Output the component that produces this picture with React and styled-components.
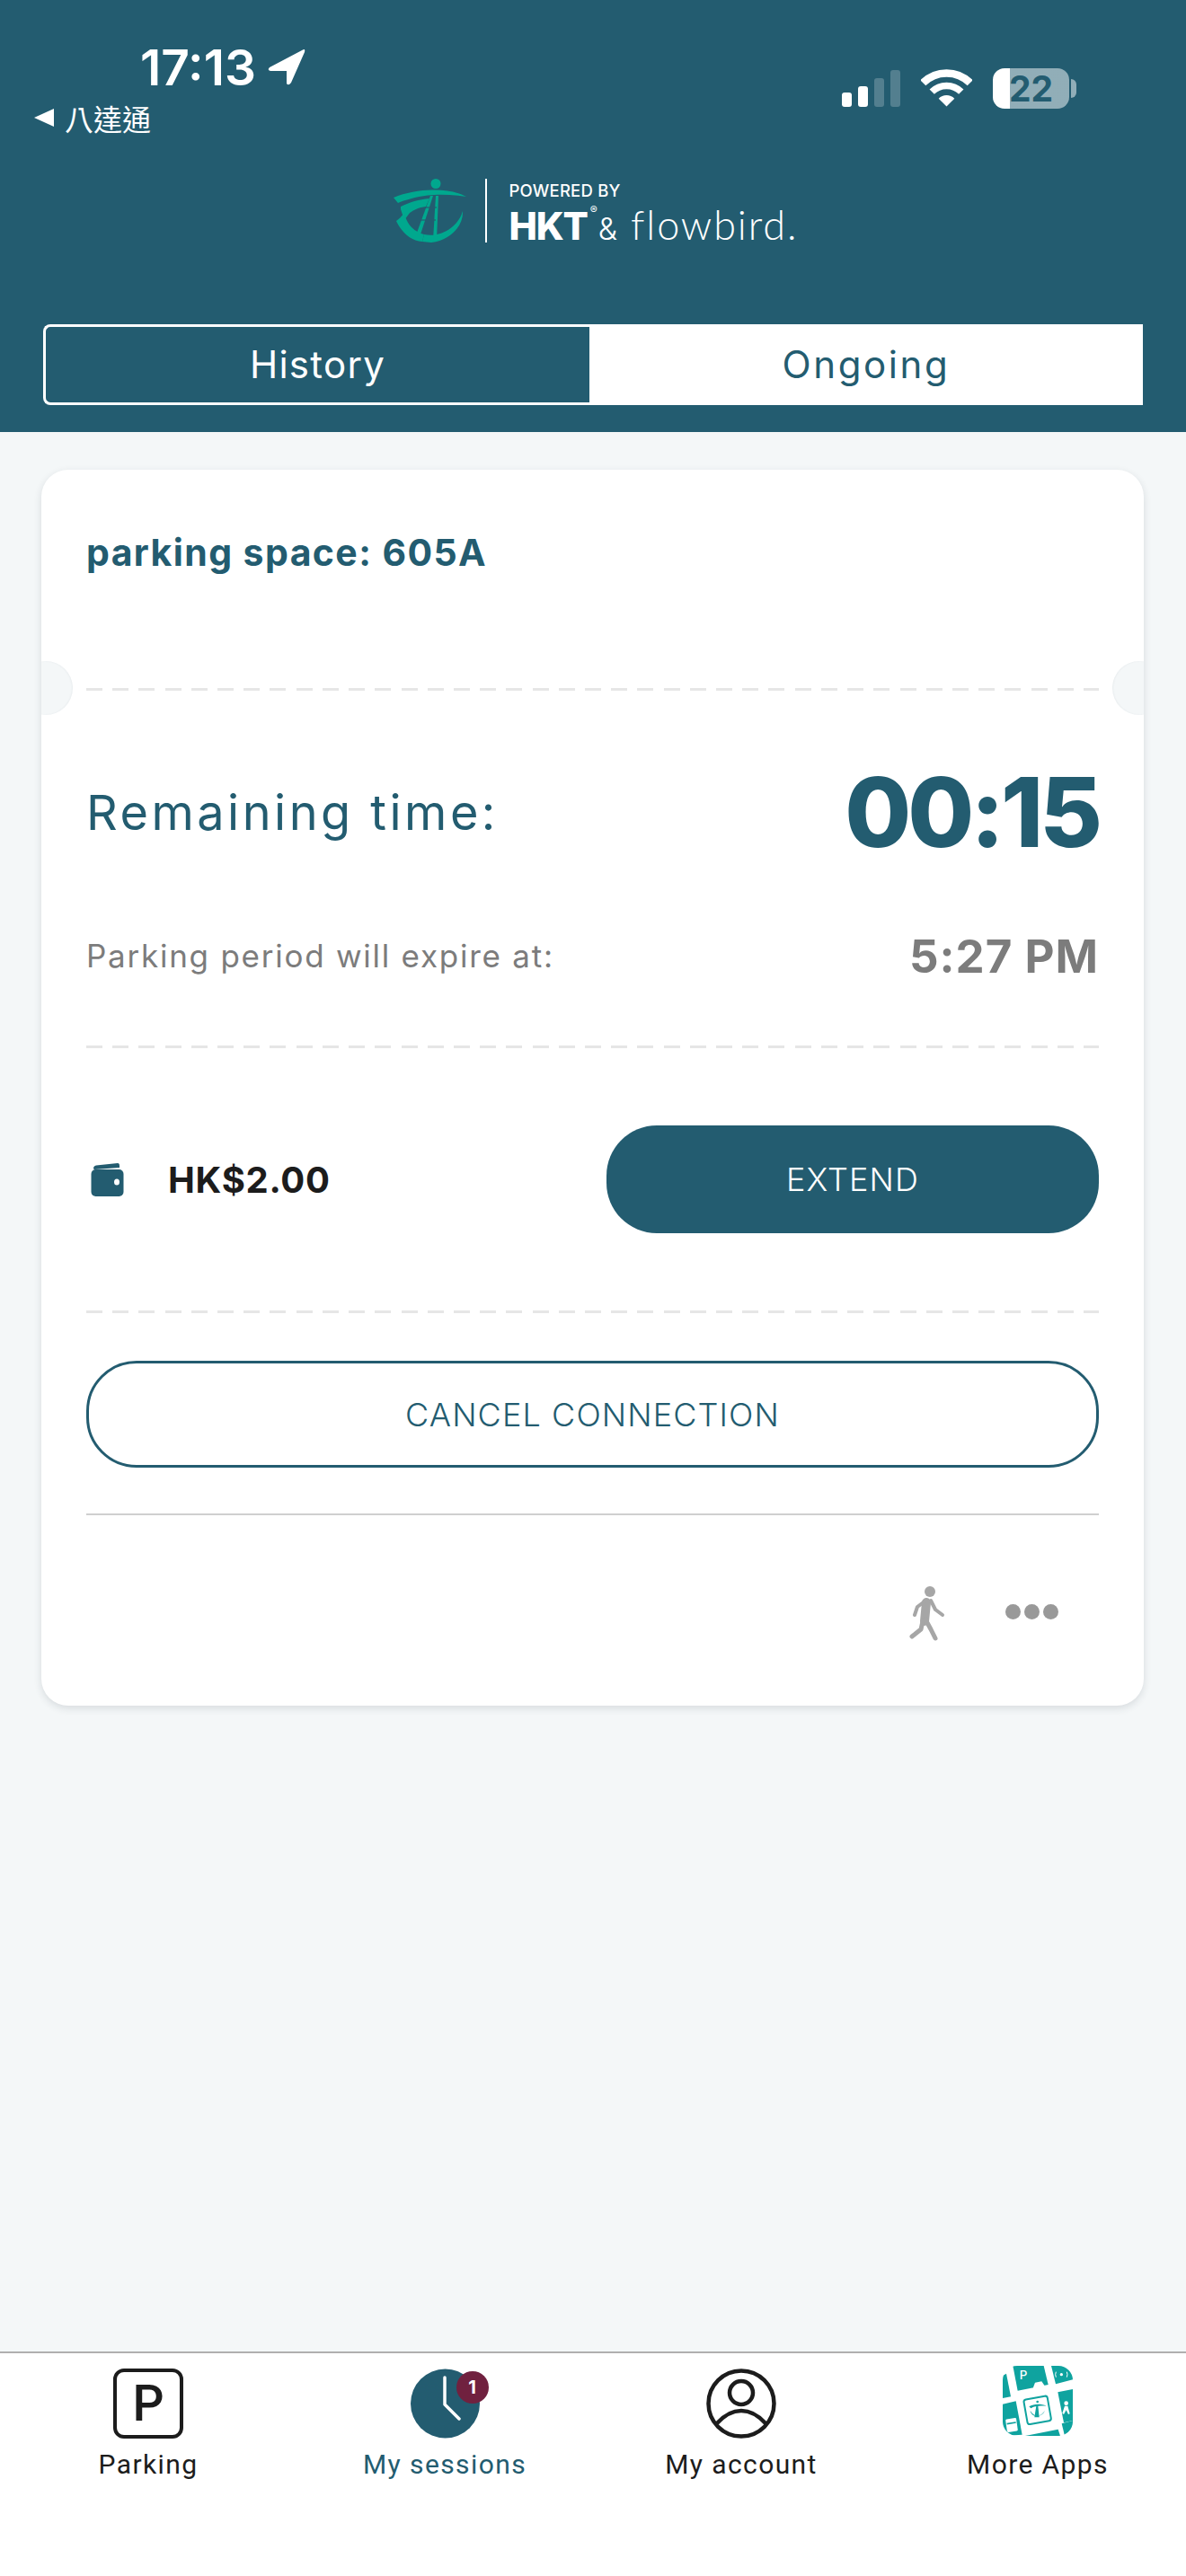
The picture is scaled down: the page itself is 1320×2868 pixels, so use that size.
import styled, { createGlobalStyle } from "styled-components";

const BRAND = "#235c70";
const APP_TEAL = "#0fa39f";

const GlobalStyle = createGlobalStyle`
  html, body {
    margin: 0;
    padding: 0;
    background: #f4f7f8;
  }
  * { box-sizing: border-box; }
`;

const Page = styled.div`
  width: 1320px;
  height: 2868px;
  display: flex;
  flex-direction: column;
  background: #f4f7f8;
  font-family: Inter, "Noto Sans", sans-serif;
`;

const Header = styled.header`
  height: 481px;
  flex: none;
  display: flex;
  flex-direction: column;
  background: ${BRAND};
`;

const StatusBar = styled.div`
  height: 150px;
  padding: 50px 122px 0 38px;
  display: flex;
  justify-content: space-between;
  color: #fff;
`;

const StatusLeft = styled.div`
  display: flex;
  flex-direction: column;
`;

const TimeRow = styled.div`
  height: 50px;
  padding-left: 118px;
  display: flex;
  align-items: center;
  gap: 13px;
  font-size: 55px;
  font-weight: 600;
  letter-spacing: 0;
  line-height: 50px;
`;

const BackRow = styled.div`
  margin-top: 12px;
  display: flex;
  align-items: center;
  gap: 12px;
  font-family: "Noto Sans CJK TC", sans-serif;
  font-size: 32px;
  line-height: 38px;
`;

const BackArrow = styled.span`
  width: 0;
  height: 0;
  border-style: solid;
  border-width: 10px 22px 10px 0;
  border-color: transparent #fff transparent transparent;
`;

const StatusRight = styled.div`
  padding-top: 24px;
  height: 69px;
  display: flex;
  align-items: flex-end;
`;

const SignalBars = styled.div`
  display: flex;
  align-items: flex-end;
  gap: 7px;
  margin-right: 23px;
`;

const SignalBar = styled.span`
  width: 11px;
  height: ${(p) => p.$h}px;
  border-radius: 3px;
  background: ${(p) => (p.$on ? "#fff" : "rgba(255,255,255,.22)")};
`;

const Battery = styled.div`
  width: 85px;
  height: 45px;
  margin-left: 23px;
  margin-bottom: -2px;
  border-radius: 13px;
  overflow: hidden;
  display: flex;
  align-items: center;
  justify-content: center;
  background: linear-gradient(90deg, #fff 0 19px, rgba(255,255,255,.5) 19px);
  color: ${BRAND};
  font-size: 39px;
  font-weight: 700;
  line-height: 1;
`;

const BatteryTip = styled.span`
  width: 6px;
  height: 21px;
  margin-left: 2px;
  margin-bottom: 10px;
  border-radius: 0 6px 6px 0;
  background: rgba(255,255,255,.5);
`;

const LogoRow = styled.div`
  margin-top: 49px;
  padding-left: 438px;
  display: flex;
  align-items: stretch;
  height: 71px;
  color: #fff;
`;

const LogoDivider = styled.span`
  width: 1.5px;
  margin: 0 25px 0 20px;
  background: #fff;
`;

const LogoText = styled.div`
  display: flex;
  flex-direction: column;
`;

const PoweredBy = styled.div`
  margin-top: 4px;
  font-size: 18.5px;
  font-weight: 500;
  line-height: 18px;
  letter-spacing: 0.2px;
`;

const BrandLine = styled.div`
  margin-top: 8px;
  line-height: 42px;
  white-space: nowrap;
`;

const Hkt = styled.span`
  font-size: 42px;
  font-weight: 800;
  letter-spacing: -1.2px;
`;

const Registered = styled.span`
  font-size: 12px;
  line-height: 0;
  vertical-align: 29px;
  margin-left: 3px;
`;

const Amp = styled.span`
  font-size: 34px;
  font-weight: 300;
  margin-left: 1px;
`;

const Flowbird = styled.span`
  margin-left: 15px;
  font-family: Lato, sans-serif;
  font-size: 45px;
  font-weight: 300;
  letter-spacing: 1.9px;
`;

const Tabs = styled.div`
  margin: auto 48px 30px;
  height: 90px;
  display: grid;
  grid-template-columns: 608px 1fr;
`;

const Tab = styled.div`
  display: flex;
  align-items: center;
  justify-content: center;
  font-size: 42px;
  font-weight: 400;
  letter-spacing: ${(p) => (p.$filled ? "2.6px" : "1.3px")};
  padding-bottom: 2px;
  color: ${(p) => (p.$filled ? BRAND : "#fff")};
  background: ${(p) => (p.$filled ? "#fff" : "transparent")};
  border: ${(p) => (p.$filled ? "none" : "3px solid #fff")};
  border-right: none;
  border-radius: ${(p) => (p.$filled ? "0" : "8px 0 0 8px")};
`;

const Card = styled.section`
  position: relative;
  margin: 42px 47px 0 46px;
  padding: 0 50px;
  height: 1376px;
  flex: none;
  background: #fff;
  border-radius: 30px;
  box-shadow: 0 3px 8px rgba(40, 60, 70, 0.14);
`;

const Notch = styled.span`
  position: absolute;
  top: 213px;
  ${(p) => (p.$right ? "right: -25px;" : "left: -25px;")}
  width: 60px;
  height: 60px;
  border-radius: 50%;
  background: #f4f7f8;
  box-shadow: inset ${(p) => (p.$right ? "1px" : "-1px")} 0 2px rgba(40, 60, 70, 0.05);
  clip-path: inset(-2px ${(p) => (p.$right ? "25px" : "-2px")} -2px ${(p) => (p.$right ? "-2px" : "25px")});
`;

const SpaceTitle = styled.div`
  height: 243px;
  padding-top: 71px;
  color: ${BRAND};
  font-size: 41px;
  font-weight: 700;
  line-height: 42px;
  letter-spacing: 1.4px;
`;

const DashLine = styled.div`
  height: 3px;
  margin-top: ${(p) => p.$top || 0}px;
  background: repeating-linear-gradient(90deg, #e6e6e6 0 18px, transparent 18px 29.21px);
`;

const Row = styled.div`
  display: flex;
  align-items: center;
  justify-content: space-between;
  height: ${(p) => p.$h}px;
  margin-top: ${(p) => p.$top}px;
`;

const RemainingLabel = styled.span`
  color: ${BRAND};
  font-size: 54px;
  font-weight: 400;
  letter-spacing: 3.5px;
`;

const Countdown = styled.span`
  color: ${BRAND};
  font-size: 107px;
  font-weight: 800;
  letter-spacing: -4px;
`;

const ExpireLabel = styled.span`
  color: #7c7c7c;
  font-size: 35px;
  letter-spacing: 1.75px;
`;

const ExpireTime = styled.span`
  color: #7c7c7c;
  font-size: 51px;
  font-weight: 700;
  letter-spacing: 1px;
`;

const Price = styled.div`
  display: flex;
  align-items: center;
  gap: 49px;
  padding-left: 5px;
  color: #1c1c1c;
  font-size: 40px;
  font-weight: 700;
  letter-spacing: 0.7px;
`;

const PillButton = styled.button`
  display: block;
  height: ${(p) => p.$h}px;
  width: ${(p) => p.$w};
  margin-top: ${(p) => p.$top || 0}px;
  padding: 0;
  border-radius: 56px;
  border: ${(p) => (p.$solid ? "none" : `3px solid ${BRAND}`)};
  background: ${(p) => (p.$solid ? BRAND : "#fff")};
  color: ${(p) => (p.$solid ? "#fff" : BRAND)};
  font-family: inherit;
  font-size: 36px;
  font-weight: 300;
  letter-spacing: 1.1px;
`;

const Rule = styled.div`
  height: 2px;
  margin-top: 51px;
  background: #cfcfcf;
`;

const CardFooter = styled.div`
  padding: 77px 45px 0 0;
  display: flex;
  justify-content: flex-end;
  align-items: flex-start;
  gap: 71px;
`;

const MoreDots = styled.div`
  display: flex;
  gap: 4px;
  margin-top: 22px;
`;

const Dot = styled.span`
  width: 17px;
  height: 17px;
  border-radius: 50%;
  background: #999;
`;

const BottomNav = styled.nav`
  margin-top: auto;
  height: 250px;
  flex: none;
  display: grid;
  grid-template-columns: repeat(4, 1fr);
  background: #fff;
  border-top: 2px solid #b0b0b0;
  font-family: Roboto, sans-serif;
`;

const NavItem = styled.div`
  display: flex;
  flex-direction: column;
  align-items: center;
  color: ${(p) => (p.$active ? BRAND : "#1c1c1c")};
`;

const NavIcon = styled.div`
  position: relative;
  height: 78px;
  margin-top: 17px;
  margin-bottom: 11px;
  display: flex;
`;

const NavLabel = styled.span`
  font-size: 30px;
  line-height: 36px;
  letter-spacing: 1.4px;
`;

const ParkingBox = styled.div`
  width: 78px;
  height: 78px;
  border: 4px solid #1c1c1c;
  border-radius: 12px;
  display: flex;
  align-items: center;
  justify-content: center;
  color: #1c1c1c;
  font-size: 55px;
  font-weight: 500;
`;

const Badge = styled.span`
  position: absolute;
  top: 3px;
  right: -10px;
  width: 36px;
  height: 36px;
  border-radius: 50%;
  display: flex;
  align-items: center;
  justify-content: center;
  background: #70213f;
  color: #fff;
  font-family: Inter, sans-serif;
  font-size: 20px;
  font-weight: 700;
`;

function LocationArrow() {
  return (
    <svg width="42" height="40" viewBox="0 0 42 40">
      <path d="M39 0.500 L2 20 Q-1 23 3 24 L21 24 L21 38 Q23 41 26 37 L41 3 Q42 -1 39 0.500Z" fill="#fff" />
    </svg>
  );
}

function WifiIcon() {
  return (
    <svg width="57" height="42" viewBox="0 0 57 42" fill="none" stroke="#fff">
      <path d="M2.3 15.3 A37 37 0 0 1 54.7 15.3" strokeWidth="8.5" />
      <path d="M12.2 25.2 A23 23 0 0 1 44.8 25.2" strokeWidth="7.5" />
      <path d="M19.7 32.7 A12.5 12.5 0 0 1 37.3 32.7 L28.5 41.5Z" fill="#fff" stroke="none" />
    </svg>
  );
}

function HktMark() {
  return (
    <svg width="82" height="71" viewBox="0 0 82 71">
      <g fill="#00a88e">
        <circle cx="47" cy="5.5" r="5.5" />
        <path d="M0 21 C14 15 32 12 46 12.5 C60 12.5 72 15 81 20 C66 17.5 50 17 38 18.5 C25 20 12 24 5 27Z" />
        <path d="M8 31 C18 26 28 23 40 22 L36 31 C28 32 22 35 18 38 L12 46 L8 34Z" />
        <path d="M3 47 C6 45 9 42 12 38 C14 48 20 58 34 62 L32 70 C18 69 8 58 3 47Z" />
        <path d="M77 36 C78 50 66 68 42 71 L32 70 L34 62 C52 66 72 54 77 36Z" />
        <path d="M41 19 L44 19 L30 62 L26 60Z" />
        <path d="M47 19 L50 19 L48 68 L44 68Z" />
      </g>
      <g stroke="#235c70" strokeWidth="1.2">
        <path d="M35 32 L48 32" />
        <path d="M31 46 L47 46" />
      </g>
    </svg>
  );
}

function WalkIcon() {
  return (
    <svg width="45" height="70" viewBox="1005 1760 45 70" style={{ margin: "-5px -5px 0" }} fill="none" stroke="#a6a6a6" strokeLinecap="round" strokeLinejoin="round">
      <circle cx="1032" cy="1773" r="6" fill="#a6a6a6" stroke="none" />
      <path d="M1028 1785 L1026 1806" strokeWidth="10" />
      <path d="M1026 1784 L1018 1790 L1015 1799" strokeWidth="4" />
      <path d="M1033 1783 L1038 1793 L1046 1799" strokeWidth="4" />
      <path d="M1024 1806 L1022 1815 L1012 1823" strokeWidth="5" />
      <path d="M1027 1804 L1033 1815 L1038 1825" strokeWidth="5" />
    </svg>
  );
}

function WalletIcon() {
  return (
    <svg width="37" height="37" viewBox="0 0 37 37">
      <path d="M3 6 Q3 3 6 2.500 L30 0 Q32 0 32 3 L32 5 L4 7Z" fill={BRAND} />
      <rect x="0.500" y="7" width="36" height="30" rx="5" fill={BRAND} />
      <ellipse cx="29" cy="21" rx="3" ry="3.500" fill="#fff" />
    </svg>
  );
}

function ClockIcon() {
  return (
    <svg width="77" height="78" viewBox="0 0 77 78" fill="none">
      <circle cx="38.500" cy="39" r="38.500" fill={BRAND} />
      <path d="M38 10 L38 40 L54 56" stroke="#fff" strokeWidth="3.500" strokeLinecap="round" strokeLinejoin="round" />
    </svg>
  );
}

function AccountIcon() {
  return (
    <svg width="78" height="78" viewBox="0 0 78 78" fill="none" stroke="#1c1c1c" strokeWidth="4.500">
      <circle cx="39" cy="39" r="36.500" />
      <circle cx="39" cy="27" r="13" />
      <path d="M12 61 C22 50 30 47 39 47 C48 47 56 50 66 61" />
    </svg>
  );
}

function AppsIcon() {
  return (
    <svg width="78" height="78" viewBox="0 0 234 234" style={{ marginTop: -3 }}>
      <defs>
        <clipPath id="appsClip">
          <rect width="234" height="234" rx="48" />
        </clipPath>
      </defs>
      <g clipPath="url(#appsClip)">
        <rect width="234" height="234" fill="#fff" />
        <g fill={APP_TEAL}>
          <polygon points="34,0 137,0 152,63 50,83" />
          <polygon points="162,0 234,0 234,46 177,61" />
          <polygon points="0,33 12,26 27,103 0,108" />
          <polygon points="184,88 234,78 234,183 204,190" />
          <polygon points="0,128 44,118 65,230 0,234" />
          <polygon points="75,234 185,212 192,234" />
          <polygon points="197,193 234,183 234,234 207,234" />
        </g>
        <rect x="76" y="106" width="80" height="84" rx="8" fill="none" stroke={APP_TEAL} strokeWidth="6" transform="rotate(-10 116 148)" />
        <g fill={APP_TEAL}>
          <circle cx="116" cy="120" r="4" />
          <path d="M88 136 C104 126 128 126 146 134 C128 132 104 134 94 142Z" />
          <path d="M92 150 C94 168 122 180 142 148 C134 168 110 178 92 150Z" />
          <path d="M112 134 L118 134 L122 172 L106 172Z" />
        </g>
        <text x="56" y="46" fill="#fff" fontFamily="Inter, sans-serif" fontSize="40" fontWeight="500">P</text>
        <g fill="#fff">
          <path d="M102 72 L108 56 L130 52 L138 64 L138 76 L102 82Z" />
          <circle cx="196" cy="29" r="5" />
          <circle cx="212" cy="125" r="7" />
          <path d="M207 134 L217 134 L224 160 L219 162 L212 148 L204 162 L199 158Z" />
          <rect x="12" y="176" width="36" height="44" rx="4" transform="rotate(-8 30 198)" />
        </g>
        <g fill="none" stroke="#fff" strokeWidth="3">
          <path d="M178 20 Q174 29 178 38" />
          <path d="M214 20 Q218 29 214 38" />
        </g>
        <path d="M14 194 L44 189" stroke={APP_TEAL} strokeWidth="5" />
      </g>
    </svg>
  );
}

export default function App() {
  return (
    <>
      <GlobalStyle />
      <Page>
        <Header>
          <StatusBar>
            <StatusLeft>
              <TimeRow>
                17:13
                <LocationArrow />
              </TimeRow>
              <BackRow>
                <BackArrow />
                八達通
              </BackRow>
            </StatusLeft>
            <StatusRight>
              <SignalBars>
                <SignalBar $on $h={16} />
                <SignalBar $on $h={23} />
                <SignalBar $h={32} />
                <SignalBar $h={41} />
              </SignalBars>
              <WifiIcon />
              <Battery>22</Battery>
              <BatteryTip />
            </StatusRight>
          </StatusBar>
          <LogoRow>
            <HktMark />
            <LogoDivider />
            <LogoText>
              <PoweredBy>POWERED BY</PoweredBy>
              <BrandLine>
                <Hkt>HKT</Hkt>
                <Registered>®</Registered>
                <Amp>&amp;</Amp>
                <Flowbird>flowbird.</Flowbird>
              </BrandLine>
            </LogoText>
          </LogoRow>
          <Tabs>
            <Tab>History</Tab>
            <Tab $filled>Ongoing</Tab>
          </Tabs>
        </Header>

        <Card>
          <Notch />
          <Notch $right />
          <SpaceTitle>parking space: 605A</SpaceTitle>
          <DashLine />
          <Row $h={120} $top={75}>
            <RemainingLabel>Remaining time:</RemainingLabel>
            <Countdown>00:15</Countdown>
          </Row>
          <Row $h={60} $top={70}>
            <ExpireLabel>Parking period will expire at:</ExpireLabel>
            <ExpireTime>5:27 PM</ExpireTime>
          </Row>
          <DashLine $top={70} />
          <Row $h={120} $top={86}>
            <Price>
              <WalletIcon />
              HK$2.00
            </Price>
            <PillButton $solid $h={120} $w="548px">EXTEND</PillButton>
          </Row>
          <DashLine $top={86} />
          <PillButton $h={119} $w="100%" $top={53}>CANCEL CONNECTION</PillButton>
          <Rule />
          <CardFooter>
            <WalkIcon />
            <MoreDots>
              <Dot />
              <Dot />
              <Dot />
            </MoreDots>
          </CardFooter>
        </Card>

        <BottomNav>
          <NavItem>
            <NavIcon>
              <ParkingBox>P</ParkingBox>
            </NavIcon>
            <NavLabel>Parking</NavLabel>
          </NavItem>
          <NavItem $active>
            <NavIcon>
              <ClockIcon />
              <Badge>1</Badge>
            </NavIcon>
            <NavLabel>My sessions</NavLabel>
          </NavItem>
          <NavItem>
            <NavIcon>
              <AccountIcon />
            </NavIcon>
            <NavLabel>My account</NavLabel>
          </NavItem>
          <NavItem>
            <NavIcon>
              <AppsIcon />
            </NavIcon>
            <NavLabel>More Apps</NavLabel>
          </NavItem>
        </BottomNav>
      </Page>
    </>
  );
}
